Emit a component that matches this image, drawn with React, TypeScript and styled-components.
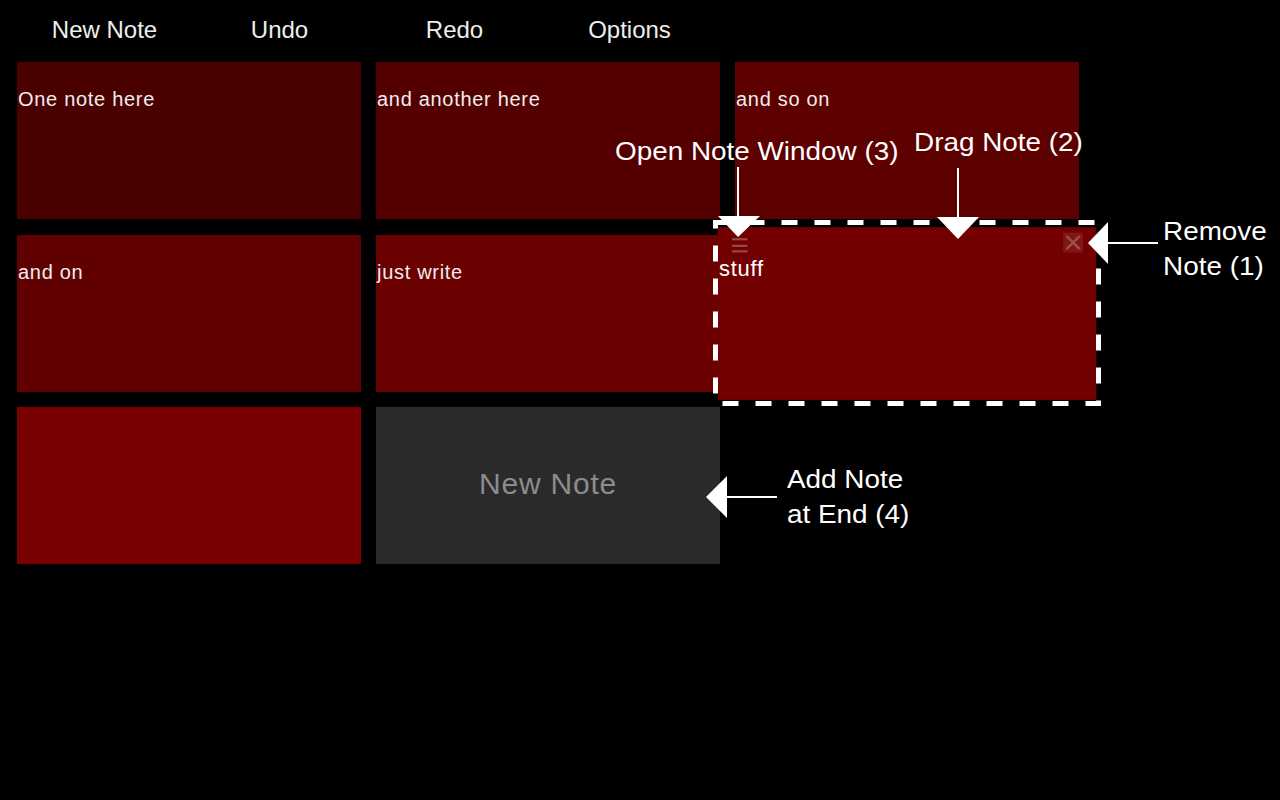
import styled, { createGlobalStyle } from "styled-components";

const GlobalStyle = createGlobalStyle`
  html, body {
    margin: 0;
    padding: 0;
    background: #000;
  }
  body {
    font-family: "Liberation Sans", Arial, sans-serif;
  }
`;

const Page = styled.div`
  position: relative;
  width: 1280px;
  height: 800px;
  background: #000;
  overflow: hidden;
`;

const Menu = styled.nav`
  display: flex;
  height: 62px;
  padding-left: 17px;
`;

const MenuButton = styled.div`
  width: 175px;
  height: 60px;
  line-height: 60px;
  text-align: center;
  font-size: 24px;
  color: #eeeeee;
  cursor: pointer;
`;

const Board = styled.div`
  display: grid;
  grid-template-columns: repeat(3, 344px);
  grid-auto-rows: 157px;
  column-gap: 15px;
  row-gap: 15.5px;
  padding-left: 17px;
`;

const Tile = styled.div<{ $shade: string; $lifted?: boolean }>`
  position: relative;
  background: ${(p) => p.$shade};
  padding: 26px 0 0 1px;
  font-size: 20px;
  line-height: 23px;
  letter-spacing: 0.7px;
  color: ${(p) => (p.$lifted ? "#ffffff" : "#eeeeee")};
  transform: ${(p) => (p.$lifted ? "scale(1.1)" : "none")};
  z-index: ${(p) => (p.$lifted ? 2 : 1)};
`;

const Handle = styled.div`
  position: absolute;
  top: 10px;
  left: 13px;
  width: 14px;
  display: flex;
  flex-direction: column;
  gap: 3.5px;

  span {
    display: block;
    height: 2px;
    background: rgba(255, 255, 255, 0.28);
  }
`;

const RemoveButton = styled.div`
  position: absolute;
  top: 5px;
  right: 12px;
  width: 18px;
  height: 18px;
  background: rgba(255, 255, 255, 0.09);
  display: flex;
  align-items: center;
  justify-content: center;
`;

const AddTile = styled.div`
  display: flex;
  align-items: center;
  justify-content: center;
  padding-bottom: 3px;
  background: #2a2a2a;
  color: #8c8c8c;
  font-size: 30px;
  letter-spacing: 0.8px;
  cursor: pointer;
`;

const Overlay = styled.svg`
  position: absolute;
  top: 0;
  left: 0;
  z-index: 5;
  pointer-events: none;
`;

const Callout = styled.div<{ $x: number; $y: number }>`
  position: absolute;
  left: ${(p) => p.$x}px;
  top: ${(p) => p.$y}px;
  z-index: 6;
  font-size: 25px;
  line-height: 35px;
  color: #ffffff;
  white-space: nowrap;
  transform: scaleX(1.115);
  transform-origin: left top;
`;

interface Note {
  id: number;
  text: string;
  shade: string;
  lifted?: boolean;
}

const notes: Note[] = [
  { id: 1, text: "One note here", shade: "#4b0000" },
  { id: 2, text: "and another here", shade: "#550000" },
  { id: 3, text: "and so on", shade: "#5d0000" },
  { id: 4, text: "and on", shade: "#610000" },
  { id: 5, text: "just write", shade: "#6a0000" },
  { id: 6, text: "stuff", shade: "#730000", lifted: true },
  { id: 7, text: "", shade: "#790000" },
];

const App = () => {
  return (
    <Page>
      <GlobalStyle />
      <Menu>
        <MenuButton>New Note</MenuButton>
        <MenuButton>Undo</MenuButton>
        <MenuButton>Redo</MenuButton>
        <MenuButton>Options</MenuButton>
      </Menu>

      <Board>
        {notes.map((note) => (
          <Tile key={note.id} $shade={note.shade} $lifted={note.lifted}>
            {note.lifted && (
              <>
                <Handle>
                  <span />
                  <span />
                  <span />
                </Handle>
                <RemoveButton>
                  <svg width="14" height="14" viewBox="0 0 14 14">
                    <path
                      d="M1 1 L13 13 M13 1 L1 13"
                      stroke="rgba(255,255,255,0.25)"
                      strokeWidth="2"
                    />
                  </svg>
                </RemoveButton>
              </>
            )}
            {note.text}
          </Tile>
        ))}
        <AddTile>New Note</AddTile>
      </Board>

      <Overlay width="1280" height="800" viewBox="0 0 1280 800">
        <rect
          x="715.5"
          y="222.5"
          width="383"
          height="181"
          fill="none"
          stroke="#fff"
          strokeWidth="5"
          strokeDasharray="16 17"
        />
        <g fill="#fff" stroke="#fff" strokeWidth="2">
          <line x1="738" y1="167" x2="738" y2="218" />
          <polygon points="718,216 760,216 738,237" stroke="none" />
          <line x1="958" y1="168" x2="958" y2="219" />
          <polygon points="937,217 979,217 958,239" stroke="none" />
          <line x1="1107" y1="243" x2="1158" y2="243" />
          <polygon points="1088,243 1108,222 1108,264" stroke="none" />
          <line x1="726" y1="497" x2="777" y2="497" />
          <polygon points="706,497 727,476 727,518" stroke="none" />
        </g>
      </Overlay>

      <Callout $x={615} $y={134}>Open Note Window (3)</Callout>
      <Callout $x={914} $y={125}>Drag Note (2)</Callout>
      <Callout $x={1163} $y={214}>
        Remove
        <br />
        Note (1)
      </Callout>
      <Callout $x={787} $y={462}>
        Add Note
        <br />
        at End (4)
      </Callout>
    </Page>
  );
};

export default App;
